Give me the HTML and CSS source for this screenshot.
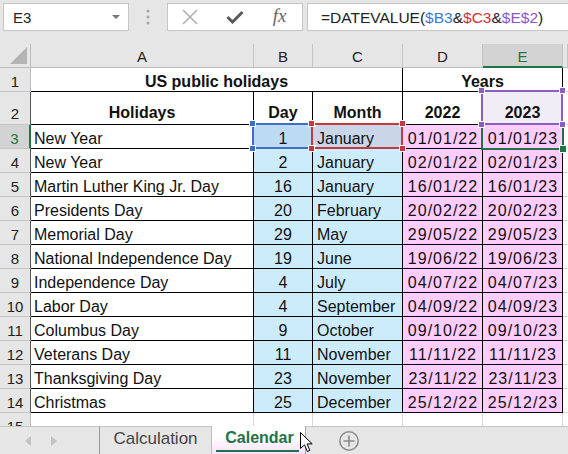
FILE: index.html
```html
<!DOCTYPE html>
<html>
<head>
    <title>Calendar - US public holidays</title>
    <link rel="stylesheet" href="styles.css">
</head>
<body>
<div class="app">
    <div class="fbar">
        <div class="namebox"><span>E3</span><span class="caret"></span></div>
        <div class="grip">
            <svg width="4" height="16" viewBox="0 0 4 16"><circle cx="2" cy="2" r="1.5" fill="#a6a6a6"/><circle cx="2" cy="8" r="1.5" fill="#a6a6a6"/><circle cx="2" cy="14" r="1.5" fill="#a6a6a6"/></svg>
        </div>
        <div class="fbtns">
            <span class="fbtn"><svg width="16" height="16" viewBox="0 0 16 16"><path d="M1 1L15 15M15 1L1 15" stroke="#b0b0b0" stroke-width="1.6" fill="none"/></svg></span>
            <span class="fbtn"><svg width="18" height="14" viewBox="0 0 18 14"><path d="M1.5 7L6.5 12L16.5 2" stroke="#5a5a5a" stroke-width="3" fill="none"/></svg></span>
            <span class="fbtn fx">fx</span>
        </div>
        <div class="formula">=DATEVALUE(<span class="r-blue">$B3</span>&amp;<span class="r-red">$C3</span>&amp;<span class="r-purple">$E$2</span>)</div>
    </div>

    <div class="sheet">
        <div class="corner"><span class="tri"></span></div>
        <div class="ch">A</div>
        <div class="ch">B</div>
        <div class="ch">C</div>
        <div class="ch">D</div>
        <div class="ch sel">E</div>
        <div class="ch"></div>

        <div class="rh">1</div>
        <div class="c title span3">US public holidays</div>
        <div class="c title span2 edge">Years</div>
        <div class="c"></div>

        <div class="rh tall bl">2</div>
        <div class="c bk head">Holidays</div>
        <div class="c bk head">Day</div>
        <div class="c bk head">Month</div>
        <div class="c bk head">2022</div>
        <div class="c bk head lav">2023
            <div class="ref purple"><i class="sq tl"></i><i class="sq tr"></i><i class="sq bl2"></i><i class="sq br"></i></div>
        </div>
        <div class="c"></div>

        <div class="rh cur">3</div>
        <div class="c bk">New Year</div>
        <div class="c bk day b3">1
            <div class="ref blue"><i class="sq tl"></i><i class="sq tr"></i><i class="sq bl2"></i><i class="sq br"></i></div>
        </div>
        <div class="c bk c3">January
            <div class="ref red"><i class="sq tl"></i><i class="sq tr"></i><i class="sq bl2"></i><i class="sq br"></i></div>
        </div>
        <div class="c bk date">01/01/22</div>
        <div class="c bk date">01/01/23
            <div class="active"><i class="handle"></i></div>
        </div>
        <div class="c"></div>

        <div class="rh bl">4</div>
        <div class="c bk">New Year</div>
        <div class="c bk day">2</div>
        <div class="c bk mon">January</div>
        <div class="c bk date">02/01/22</div>
        <div class="c bk date">02/01/23</div>
        <div class="c"></div>

        <div class="rh bl">5</div>
        <div class="c bk">Martin Luther King Jr. Day</div>
        <div class="c bk day">16</div>
        <div class="c bk mon">January</div>
        <div class="c bk date">16/01/22</div>
        <div class="c bk date">16/01/23</div>
        <div class="c"></div>

        <div class="rh bl">6</div>
        <div class="c bk">Presidents Day</div>
        <div class="c bk day">20</div>
        <div class="c bk mon">February</div>
        <div class="c bk date">20/02/22</div>
        <div class="c bk date">20/02/23</div>
        <div class="c"></div>

        <div class="rh bl">7</div>
        <div class="c bk">Memorial Day</div>
        <div class="c bk day">29</div>
        <div class="c bk mon">May</div>
        <div class="c bk date">29/05/22</div>
        <div class="c bk date">29/05/23</div>
        <div class="c"></div>

        <div class="rh bl">8</div>
        <div class="c bk">National Independence Day</div>
        <div class="c bk day">19</div>
        <div class="c bk mon">June</div>
        <div class="c bk date">19/06/22</div>
        <div class="c bk date">19/06/23</div>
        <div class="c"></div>

        <div class="rh bl">9</div>
        <div class="c bk">Independence Day</div>
        <div class="c bk day">4</div>
        <div class="c bk mon">July</div>
        <div class="c bk date">04/07/22</div>
        <div class="c bk date">04/07/23</div>
        <div class="c"></div>

        <div class="rh bl">10</div>
        <div class="c bk">Labor Day</div>
        <div class="c bk day">4</div>
        <div class="c bk mon">September</div>
        <div class="c bk date">04/09/22</div>
        <div class="c bk date">04/09/23</div>
        <div class="c"></div>

        <div class="rh bl">11</div>
        <div class="c bk">Columbus Day</div>
        <div class="c bk day">9</div>
        <div class="c bk mon">October</div>
        <div class="c bk date">09/10/22</div>
        <div class="c bk date">09/10/23</div>
        <div class="c"></div>

        <div class="rh bl">12</div>
        <div class="c bk">Veterans Day</div>
        <div class="c bk day">11</div>
        <div class="c bk mon">November</div>
        <div class="c bk date">11/11/22</div>
        <div class="c bk date">11/11/23</div>
        <div class="c"></div>

        <div class="rh bl">13</div>
        <div class="c bk">Thanksgiving Day</div>
        <div class="c bk day">23</div>
        <div class="c bk mon">November</div>
        <div class="c bk date">23/11/22</div>
        <div class="c bk date">23/11/23</div>
        <div class="c"></div>

        <div class="rh bl">14</div>
        <div class="c bk">Christmas</div>
        <div class="c bk day">25</div>
        <div class="c bk mon">December</div>
        <div class="c bk date">25/12/22</div>
        <div class="c bk date">25/12/23</div>
        <div class="c"></div>

        <div class="rh">15</div>
        <div class="c"></div>
        <div class="c"></div>
        <div class="c"></div>
        <div class="c"></div>
        <div class="c"></div>
        <div class="c"></div>
    </div>

    <div class="tabs">
        <div class="nav">
            <span class="arr left"></span>
            <span class="arr right"></span>
        </div>
        <div class="tab">Calculation</div>
        <div class="tab on">Calendar</div>
        <div class="rest">
            <svg class="plus" width="22" height="22" viewBox="0 0 22 22"><circle cx="11" cy="11" r="9.2" stroke="#8c8c8c" stroke-width="1.5" fill="none"/><path d="M11 5.5V16.5M5.5 11H16.5" stroke="#8c8c8c" stroke-width="1.6"/></svg>
        </div>
        <svg class="cursor" width="13" height="21" viewBox="0 0 13 21"><path d="M0.5 0.5V16.5L4.5 12.8L7.3 19.5L9.8 18.4L7.1 11.9H12.2Z" fill="#fff" stroke="#000" stroke-width="1"/></svg>
    </div>
</div>
</body>
</html>
```

FILE: styles.css
```css
body {
    margin: 0;
    font-family: "Liberation Sans", Arial, sans-serif;
    color: #111;
}
.app {
    width: 568px;
    height: 454px;
    overflow: hidden;
    position: relative;
    background: #e6e6e6;
}

/* formula bar */
.fbar {
    display: flex;
    height: 44px;
    padding-top: 3px;
    box-sizing: border-box;
    background: #e6e6e6;
}
.namebox {
    margin-left: 3px;
    width: 126px;
    height: 28px;
    box-sizing: border-box;
    background: #fff;
    border: 1px solid #c6c6c6;
    display: flex;
    align-items: center;
    justify-content: space-between;
    padding: 0 8px 0 9px;
    font-size: 15px;
    color: #222;
}
.caret {
    width: 0;
    height: 0;
    border-left: 4px solid transparent;
    border-right: 4px solid transparent;
    border-top: 4px solid #777;
}
.grip {
    width: 38px;
    height: 28px;
    display: flex;
    align-items: center;
    justify-content: center;
}
.fbtns {
    width: 136px;
    height: 28px;
    box-sizing: border-box;
    background: #fff;
    border: 1px solid #c6c6c6;
    display: flex;
}
.fbtn {
    width: 45px;
    display: flex;
    align-items: center;
    justify-content: center;
}
.fx {
    font-family: "Liberation Serif", serif;
    font-style: italic;
    font-size: 19px;
    color: #666;
    padding-bottom: 2px;
}
.formula {
    margin-left: 4px;
    flex: 1;
    height: 28px;
    box-sizing: border-box;
    background: #fff;
    border: 1px solid #c6c6c6;
    border-right: none;
    padding-left: 13px;
    font-size: 15.5px;
    line-height: 27px;
    color: #222;
    white-space: nowrap;
}
.r-blue { color: #3b78d6; }
.r-red { color: #d03038; }
.r-purple { color: #8a55c8; }

/* sheet grid */
.sheet {
    display: grid;
    grid-template-columns: 31px 223px 59px 90px 80px 80px 5px;
    grid-template-rows: 24px 24px 33px repeat(13, 24px);
    height: 382px;
    overflow: hidden;
    background: #fff;
}
.corner {
    background: #e6e6e6;
    border-right: 1px solid #bcbcbc;
    border-bottom: 1px solid #bcbcbc;
    position: relative;
}
.tri {
    position: absolute;
    right: 3px;
    bottom: 3px;
    width: 0;
    height: 0;
    border-left: 17px solid transparent;
    border-bottom: 17px solid #b4b4b4;
}
.ch {
    background: #e6e6e6;
    border-right: 1px solid #c4c4c4;
    border-bottom: 1px solid #bcbcbc;
    text-align: center;
    font-size: 15px;
    line-height: 25px;
    color: #222;
}
.ch.sel {
    background: #d3d3d3;
    color: #217346;
    border-bottom: 2px solid #217346;
}
.rh {
    background: #e6e6e6;
    border-right: 1px solid #bcbcbc;
    border-bottom: 1px solid #c4c4c4;
    text-align: center;
    font-size: 15px;
    line-height: 23px;
    padding-top: 2px;
    color: #222;
}
.rh.bl { border-right-color: #555; }
.rh.tall { padding-top: 10px; }
.rh.cur {
    background: #d3d3d3;
    color: #217346;
    border-right: 2px solid #217346;
}

.c {
    position: relative;
    border-right: 1px solid #d6d6d6;
    border-bottom: 1px solid #d6d6d6;
    padding: 2px 3px 0;
    font-size: 16px;
    line-height: 23px;
    white-space: nowrap;
}
.bk {
    border-right-color: #000;
    border-bottom-color: #000;
}
.title {
    font-weight: bold;
    text-align: center;
    border-bottom-color: #000;
    border-right-color: #000;
}
.span3 { grid-column: span 3; }
.span2 { grid-column: span 2; }
.head {
    font-weight: bold;
    text-align: center;
    padding-top: 9px;
}
.lav { background: #f1edf6; }
.day {
    background: #ccecfc;
    text-align: center;
}
.mon {
    background: #ccecfc;
    padding-left: 4px;
}
.b3 { background: #bcdaf2; }
.c3 {
    background: #c8d6e8;
    padding-left: 4px;
}
.date {
    background: #ffccfe;
    text-align: center;
    letter-spacing: 1px;
    padding-left: 4px;
}

/* reference highlight boxes */
.ref {
    position: absolute;
    top: -2px;
    left: -2px;
    right: -1px;
    bottom: -1px;
    border: 2px solid;
    z-index: 2;
}
.ref.blue { border-color: #3f6fc4; }
.ref.red { border-color: #c4393f; }
.ref.purple { border-color: #8b5ec1; }
.sq {
    position: absolute;
    width: 5px;
    height: 5px;
    border: 1px solid #fff;
    z-index: 4;
}
.blue .sq { background: #3f6fc4; }
.red .sq { background: #c4393f; }
.purple .sq { background: #8b5ec1; }
.sq.tl { top: -5px; left: -5px; }
.sq.tr { top: -5px; right: -5px; }
.sq.bl2 { bottom: -5px; left: -5px; }
.sq.br { bottom: -5px; right: -5px; }
.active {
    position: absolute;
    top: -2px;
    left: -2px;
    right: -2px;
    bottom: -2px;
    border: 2px solid #217346;
    z-index: 1;
}
.handle {
    position: absolute;
    right: -5px;
    bottom: -5px;
    width: 6px;
    height: 6px;
    background: #217346;
    border: 1px solid #fff;
}

/* sheet tabs */
.tabs {
    display: flex;
    height: 28px;
    position: relative;
    background: #e6e6e6;
}
.nav {
    width: 100px;
    border-top: 1px solid #c6c6c6;
    border-right: 1px solid #9a9a9a;
    box-sizing: border-box;
    display: flex;
    align-items: center;
    padding-left: 25px;
    gap: 20px;
    background-clip: padding-box;
}
.arr {
    width: 0;
    height: 0;
    border-top: 5px solid transparent;
    border-bottom: 5px solid transparent;
}
.arr.left { border-right: 6px solid #c2c2c2; }
.arr.right { border-left: 6px solid #c2c2c2; }
.tab {
    width: 112px;
    box-sizing: border-box;
    border-top: 1px solid #c6c6c6;
    border-right: 1px solid #bdbdbd;
    text-align: center;
    font-size: 17px;
    line-height: 24px;
    color: #444;
}
.tab.on {
    width: 94px;
    border-top: none;
    border-right: 1px solid #a8a8a8;
    background: linear-gradient(#ffffff 35%, #fbe0fb);
    color: #217346;
    font-weight: bold;
    font-size: 16px;
    line-height: 24px;
    padding-left: 2px;
    position: relative;
}
.tab.on::after {
    content: "";
    position: absolute;
    left: 4px;
    right: 6px;
    bottom: 2px;
    height: 2px;
    background: #217346;
}
.rest {
    flex: 1;
    border-top: 1px solid #c6c6c6;
    padding-left: 32px;
    padding-top: 3px;
}
.cursor {
    position: absolute;
    left: 300px;
    top: 6px;
}
```
